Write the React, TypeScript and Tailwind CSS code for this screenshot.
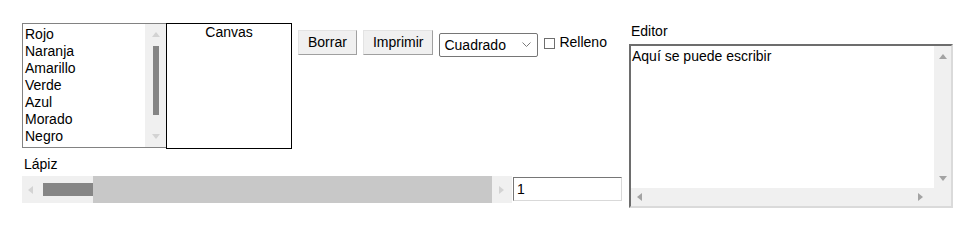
import React from "react";

const colors = ["Rojo", "Naranja", "Amarillo", "Verde", "Azul", "Morado", "Negro"];

function Tri({ dir, className }: { dir: "up" | "down" | "left" | "right"; className?: string }) {
  const pts = {
    up: "0,7 4,2 8,7",
    down: "0,1 4,6 8,1",
    left: "6,0 1,4 6,8",
    right: "2,0 7,4 2,8",
  }[dir];
  return (
    <svg width="8" height="8" viewBox="0 0 8 8" className={className}>
      <polygon points={pts} fill="currentColor" />
    </svg>
  );
}

export default function App() {
  return (
    <div
      className="flex w-[970px] h-[235px] bg-white pt-[23px] pl-[22px] text-[14px] leading-[17px] text-black"
      style={{ fontFamily: '"Liberation Sans", Arial, sans-serif' }}
    >
      {/* left side */}
      <div className="flex flex-col w-[600px]">
        <div className="flex items-start">
          {/* listbox */}
          <div className="flex w-[145px] h-[125px] border border-[#828282] bg-white">
            <div className="flex-1 pl-[2px] pt-[2px]">
              {colors.map((c) => (
                <div key={c}>{c}</div>
              ))}
            </div>
            <div className="flex flex-col items-center w-[21px] bg-[#f0f0f0]">
              <Tri dir="up" className="mt-[6px] text-[#d3d3d3]" />
              <div className="mt-[8px] w-[6px] h-[69px] bg-[#858585]" />
              <div className="flex-1" />
              <Tri dir="down" className="mb-[6px] text-[#d3d3d3]" />
            </div>
          </div>
          {/* canvas */}
          <div className="w-[126px] h-[126px] -ml-px border border-black text-center">
            Canvas
          </div>
          {/* controls */}
          <div className="flex items-start ml-[6px] mt-[7px]">
            <button className="h-[25px] px-[9px] bg-[#f0f0f0] border border-t-[#e3e3e3] border-l-[#e3e3e3] border-r-[#a0a0a0] border-b-[#a0a0a0]">
              Borrar
            </button>
            <button className="h-[25px] ml-[6px] px-[9px] bg-[#f0f0f0] border border-t-[#e3e3e3] border-l-[#e3e3e3] border-r-[#a0a0a0] border-b-[#a0a0a0]">
              Imprimir
            </button>
            <div className="flex items-center justify-between ml-[6px] mt-[3px] w-[99px] h-[24px] pl-[4px] pr-[6px] border border-[#767676] rounded-[2px] bg-white">
              <span>Cuadrado</span>
              <svg width="9" height="6" viewBox="0 0 9 6">
                <polyline points="0.5,0.5 4.5,4.5 8.5,0.5" fill="none" stroke="#7a7a7a" strokeWidth="1" />
              </svg>
            </div>
            <div className="flex items-start ml-[6px] mt-[4px]">
              <div className="mt-[4px] w-[11px] h-[11px] border border-[#6e6e6e] bg-white" />
              <span className="ml-[4px]">Relleno</span>
            </div>
          </div>
        </div>

        <div className="mt-[7px] pl-[2px]">Lápiz</div>

        <div className="flex items-start mt-[3px]">
          {/* horizontal scrollbar */}
          <div className="flex items-center w-[490px] h-[27px] bg-[#f0f0f0]">
            <Tri dir="left" className="ml-[5px] text-[#d3d3d3]" />
            <div className="ml-[8px] w-[50px] h-[13px] bg-[#868686]" />
            <div className="w-[399px] h-[27px] bg-[#c8c8c8]" />
            <Tri dir="right" className="ml-[5px] text-[#d3d3d3]" />
          </div>
          <div className="ml-[1px] mt-[1px] w-[109px] h-[24px] pl-[3px] border border-t-[#767676] border-l-[#767676] border-r-[#d9d9d9] border-b-[#d9d9d9] bg-white leading-[22px]">
            1
          </div>
        </div>
      </div>

      {/* right side */}
      <div className="flex flex-col ml-[7px]">
        <div className="pl-[2px]">Editor</div>
        <div className="mt-[4px] flex flex-col w-[324px] h-[164px] border-2 border-t-[#6d6d6d] border-l-[#6d6d6d] border-r-[#dadada] border-b-[#dadada] bg-white">
          <div className="flex flex-1">
            <div className="flex-1 pl-[1px] pt-[2px]">Aquí se puede escribir</div>
            <div className="flex flex-col items-center w-[17px] bg-[#f0f0f0]">
              <Tri dir="up" className="mt-[6px] text-[#a3a3a3]" />
              <div className="flex-1" />
              <Tri dir="down" className="mb-[5px] text-[#a3a3a3]" />
            </div>
          </div>
          <div className="flex items-center h-[18px] bg-[#f0f0f0]">
            <Tri dir="left" className="ml-[5px] text-[#a3a3a3]" />
            <div className="flex-1" />
            <Tri dir="right" className="mr-[27px] text-[#a3a3a3]" />
          </div>
        </div>
      </div>
    </div>
  );
}
